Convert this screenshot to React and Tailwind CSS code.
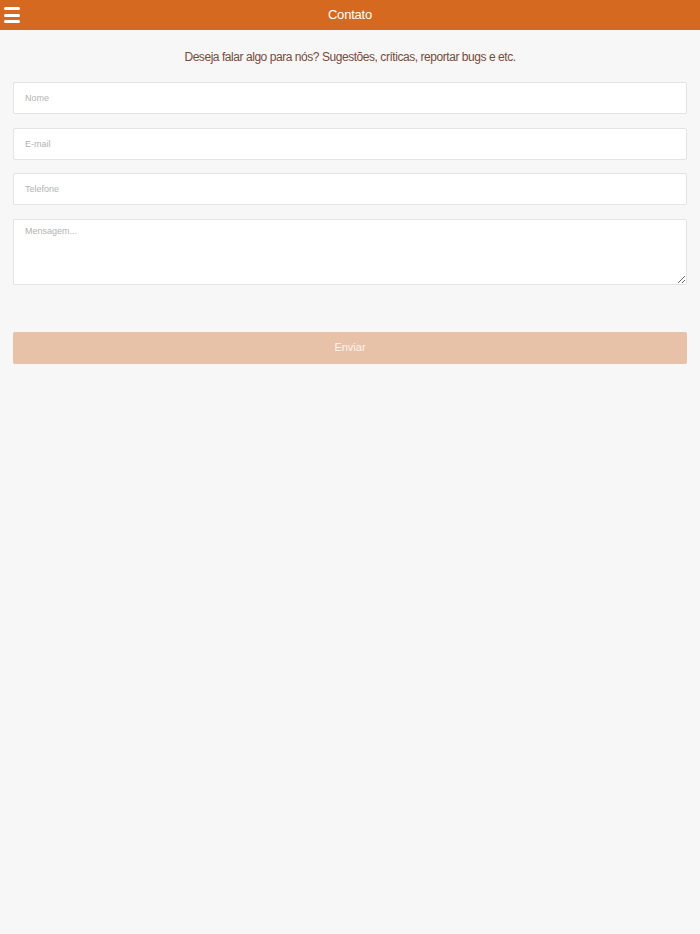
export default function App() {
  const inputCls =
    'w-full h-[32px] bg-white border border-[#e3e3e3] rounded-[2px] px-[11px] text-[9px] text-[#555] placeholder:text-[#b3b3b3] outline-none'

  return (
    <div className="min-h-[934px] bg-[#f7f7f7] font-['Liberation_Sans',Arial,sans-serif]">
      {/* Header */}
      <header className="relative h-[30px] bg-[#d4691f] flex items-center justify-center">
        <button className="absolute left-[4px] top-[7px] flex flex-col gap-[3.5px]">
          <span className="block w-[16px] h-[3px] bg-white rounded-full" />
          <span className="block w-[16px] h-[3px] bg-white rounded-full" />
          <span className="block w-[16px] h-[3px] bg-white rounded-full" />
        </button>
        <h1 className="text-white text-[13px] font-medium tracking-[-0.2px] -mt-[1px]">Contato</h1>
      </header>

      <main className="px-[13px] pt-[18px]">
        <p className="text-center text-[12px] tracking-[-0.45px] text-[#774a3c]">
          Deseja falar algo para nós? Sugestões, críticas, reportar bugs e etc.
        </p>

        <form className="mt-[16px] flex flex-col gap-[13.5px]">
          <input className={inputCls} placeholder="Nome" />
          <input className={inputCls} placeholder="E-mail" />
          <input className={inputCls} placeholder="Telefone" />
          <textarea
            className="w-full h-[66px] bg-white border border-[#e3e3e3] rounded-[2px] px-[11px] py-[5px] text-[9px] text-[#555] placeholder:text-[#b3b3b3] outline-none"
            placeholder="Mensagem..."
          />
          <button
            type="button"
            className="mt-[33.5px] w-full h-[32px] bg-[#e8c2a8] rounded-[2px] text-[11px] text-[#fdf3ee]"
          >
            Enviar
          </button>
        </form>
      </main>
    </div>
  )
}
